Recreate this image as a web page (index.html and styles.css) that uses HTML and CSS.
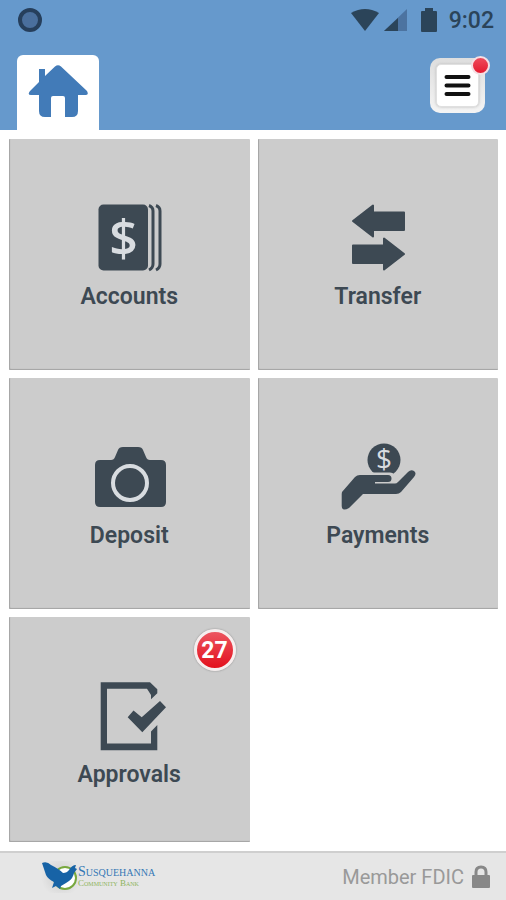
FILE: index.html
```
<!DOCTYPE html>
<html lang="en">
<head>
    <meta charset="UTF-8">
    <meta name="viewport" content="width=device-width, initial-scale=1.0">
    <title>Susquehanna Community Bank</title>
    <link rel="stylesheet" href="styles.css">
</head>
<body>
    <header class="top">
        <div class="status-bar">
            <span class="status-dot"></span>
            <div class="status-icons">
                <svg width="28" height="24" viewBox="0 0 28 24" aria-hidden="true">
                    <path d="M0 5Q14 -3 28 5L14 23Z"/>
                </svg>
                <svg class="signal" width="24" height="24" viewBox="0 0 24 24" aria-hidden="true">
                    <path class="faded" d="M24 1V23H1Z"/>
                    <path d="M15 10V23H1Z"/>
                </svg>
                <svg class="battery" width="16" height="24" viewBox="0 0 16 24" aria-hidden="true">
                    <path d="M4 0H12V3H15Q16 3 16 4V23Q16 24 15 24H1Q0 24 0 23V4Q0 3 1 3H4Z"/>
                </svg>
                <span class="clock">9:02</span>
            </div>
        </div>
        <nav class="nav-bar">
            <a class="home-tab" href="#" aria-label="Home">
                <svg width="60" height="54" viewBox="0 0 60 54" aria-hidden="true">
                    <path d="M11 5H17V12L27 2.500Q30 0 33 2.500L59 27Q61 31 58 31H50V47Q50 53 44 53H37V34Q37 32 35 32H25Q23 32 23 34V53H17Q11 53 11 47V31H3Q-1 31 2 27L11 18Z"/>
                </svg>
            </a>
            <button class="menu-button" type="button" aria-label="Menu">
                <span class="menu-inner">
                    <svg width="27" height="23" viewBox="0 0 27 23" aria-hidden="true">
                        <path d="M2.500 3H24.500M2.500 11.500H24.500M2.500 20H24.500"/>
                    </svg>
                </span>
                <span class="menu-alert"></span>
            </button>
        </nav>
    </header>

    <main class="tiles">
        <a class="tile" href="#accounts">
            <svg class="tile-icon" viewBox="0 0 80 72" aria-hidden="true">
                <rect x="9.500" y="2.500" width="49.500" height="66" rx="5"/>
                <path class="page-edge" d="M60 3.500Q64 5 64 9V62Q64 66 60 68M67 3.500Q71 5 71 9V62Q71 66 67 68"/>
                <text class="dollar" x="34.500" y="54">$</text>
            </svg>
            <span class="tile-label">Accounts</span>
        </a>
        <a class="tile" href="#transfer">
            <svg class="tile-icon" viewBox="0 0 80 72" aria-hidden="true">
                <path class="rounded" d="M15 19L35 3.500V10.500H66V28H35V34.500Z"/>
                <path class="rounded" d="M66 52L46 36.500V43.500H15V61H46V67.500Z"/>
            </svg>
            <span class="tile-label">Transfer</span>
        </a>
        <a class="tile" href="#deposit">
            <svg class="tile-icon" viewBox="0 0 80 72" aria-hidden="true">
                <path d="M11 19H22Q25 19 26 16L29 9Q30 6 34 6H49Q53 6 54 9L57 16Q58 19 61 19H72Q77 19 77 24V61Q77 66 72 66H11Q6 66 6 61V24Q6 19 11 19Z"/>
                <circle class="lens" cx="41" cy="42" r="17"/>
            </svg>
            <span class="tile-label">Deposit</span>
        </a>
        <a class="tile" href="#payments">
            <svg class="tile-icon" viewBox="0 0 80 72" aria-hidden="true">
                <circle cx="46" cy="19" r="16.500"/>
                <text class="dollar small" x="46" y="28">$</text>
                <path class="palm-gap" d="M20 34H52Q55 34 55 38"/>
                <path d="M4 51L17 36Q19 34 22 34H50Q53.500 34 53.500 37.500T50 41H37V42.500H57Q58.500 42.500 60 41L70 31Q73 28 76 30T76 36L63 51Q61 53 58 53H25L11 67Q4 71 3.700 65V53Z"/>
            </svg>
            <span class="tile-label">Payments</span>
        </a>
        <a class="tile" href="#approvals">
            <svg class="tile-icon" viewBox="0 0 80 72" aria-hidden="true">
                <path d="M11.700 2.300H61L68.300 9.300V13.300L62 19.300V15L58 8.700H18V63.500H62V51.500L68.300 45V70.300H11.700Z"/>
                <path d="M38.700 37.300L44.500 30.500L52.700 37.300L71 21L77 27.300L53.300 52.300Z"/>
            </svg>
            <span class="tile-label">Approvals</span>
            <span class="badge">27</span>
        </a>
    </main>

    <footer class="footer">
        <div class="bank-logo">
            <svg width="37" height="32" viewBox="0 0 37 32" aria-hidden="true">
                <circle class="ring" cx="24" cy="17" r="11"/>
                <path class="eagle" d="M1 2Q6 0 10 4Q18 8 22 12Q26 12 28 9Q31 4 35 4L34 7L36 8L33 12Q32 17 28 20L25 22L20 25L19 28L15 25L11 27L13 21Q7 18 5 14L4 11L3 8Z"/>
            </svg>
            <div class="bank-name">
                <span class="bank-title">Susquehanna</span>
                <span class="bank-subtitle">Community Bank</span>
            </div>
        </div>
        <div class="fdic">
            <span>Member FDIC</span>
            <svg width="18" height="24" viewBox="0 0 18 24" aria-hidden="true">
                <path class="shackle" d="M4 12V7Q4 2 9 2T14 7V12"/>
                <rect y="10" width="18" height="13" rx="1"/>
            </svg>
        </div>
    </footer>
</body>
</html>
```
FILE: styles.css
```
* {
    box-sizing: border-box;
}

body {
    margin: 0;
    min-height: 100vh;
    display: flex;
    flex-direction: column;
    background: #fff;
    color: #3d4953;
    font-family: Roboto, "Liberation Sans", sans-serif;
}

a {
    color: inherit;
    text-decoration: none;
}

.top {
    background: #6699cc;
}

.status-bar {
    display: flex;
    align-items: center;
    justify-content: space-between;
    height: 40px;
    padding: 0 12px 0 18px;
}

.status-dot {
    width: 24px;
    height: 24px;
    border: 4px solid #263f5c;
    border-radius: 50%;
    background: #4a6f9d;
}

.status-icons {
    display: flex;
    align-items: center;
    fill: #2b4459;
}

.signal {
    margin-left: 4px;
}

.signal .faded {
    fill: #4c73a0;
}

.battery {
    margin: 0 12px 0 14px;
}

.clock {
    color: #2b4459;
    font-size: 23px;
    font-weight: 500;
    line-height: 28px;
    padding-top: 2px;
}

.nav-bar {
    display: flex;
    align-items: flex-end;
    justify-content: space-between;
    height: 90px;
    padding: 0 21px 0 17px;
}

.home-tab {
    display: flex;
    justify-content: center;
    width: 82px;
    height: 75px;
    padding-top: 9px;
    border-radius: 6px 6px 0 0;
    background: #fff;
    fill: #427bb8;
}

.menu-button {
    position: relative;
    width: 55px;
    height: 55px;
    margin-bottom: 17px;
    padding: 6px;
    border: 0;
    border-radius: 10px;
    background: linear-gradient(#dedede, #f4f4f4);
    cursor: pointer;
}

.menu-inner {
    display: flex;
    align-items: center;
    justify-content: center;
    height: 100%;
    border: 1px solid #e0e0e0;
    border-radius: 5px;
    background: #fff;
    box-shadow: 0 0 3px #bbb;
}

.menu-inner path {
    stroke: #111;
    stroke-width: 4;
    stroke-linecap: round;
}

.menu-alert {
    position: absolute;
    top: -2px;
    right: -5px;
    width: 19px;
    height: 19px;
    border: 2px solid #f5dfe4;
    border-radius: 50%;
    background: linear-gradient(#ee4a5b, #e51b30);
}

.tiles {
    flex: 1;
    display: grid;
    grid-template-columns: 1fr 1fr;
    grid-template-rows: minmax(231px, auto) minmax(231px, auto) 1fr;
    gap: 8px;
    padding: 9px 8px 9px 9px;
}

.tile {
    position: relative;
    display: flex;
    flex-direction: column;
    align-items: center;
    gap: 8px;
    padding: 63px 8px 24px;
    border-radius: 1px;
    background: #cccccc;
    box-shadow: inset 1px -1px 1px #a4a4a4;
}

.tile-icon {
    width: 80px;
    height: 72px;
    overflow: visible;
    fill: #3d4953;
}

.tile-label {
    font-size: 23px;
    font-weight: 600;
    line-height: 30px;
}

.page-edge {
    fill: none;
    stroke: #3d4953;
    stroke-width: 3;
}

.rounded {
    stroke: #3d4953;
    stroke-width: 2;
    stroke-linejoin: round;
}

.dollar {
    fill: #d8dce0;
    font-family: "Open Sans", sans-serif;
    font-size: 50px;
    font-weight: 600;
    text-anchor: middle;
}

.dollar.small {
    font-size: 28px;
    font-weight: 400;
}

.lens {
    fill: none;
    stroke: #d8dce0;
    stroke-width: 4;
}

.palm-gap {
    fill: none;
    stroke: #cccccc;
    stroke-width: 5;
}

.badge {
    position: absolute;
    top: 12px;
    right: 14px;
    width: 42px;
    height: 42px;
    border: 3px solid #f6eeee;
    border-radius: 50%;
    background: linear-gradient(#ec5560, #e3101c);
    box-shadow: 0 0 2px #888;
    color: #fff;
    font-size: 23px;
    font-weight: 700;
    line-height: 38px;
    text-align: center;
}

.footer {
    display: flex;
    align-items: center;
    justify-content: space-between;
    height: 49px;
    padding: 0 16px 0 41px;
    border-top: 2px solid #cfcfcf;
    background: #e6e6e6;
}

.bank-logo {
    display: flex;
    align-items: center;
    background: radial-gradient(circle at 20px 16px, #cccccc, #e6e6e6 20px);
}

.ring {
    fill: #fff;
    stroke: #78a83e;
    stroke-width: 2;
}

.eagle {
    fill: #1763a6;
}

.bank-name {
    display: flex;
    flex-direction: column;
    font-family: "Liberation Serif", serif;
    font-variant: small-caps;
}

.bank-title {
    color: #3477b5;
    font-size: 14px;
    line-height: 12px;
}

.bank-subtitle {
    color: #8db45c;
    font-size: 9px;
    line-height: 10px;
}

.fdic {
    display: flex;
    align-items: center;
    gap: 8px;
    color: #999;
    fill: #888;
    font-size: 20px;
}

.shackle {
    fill: none;
    stroke: #888;
    stroke-width: 3;
}
```
